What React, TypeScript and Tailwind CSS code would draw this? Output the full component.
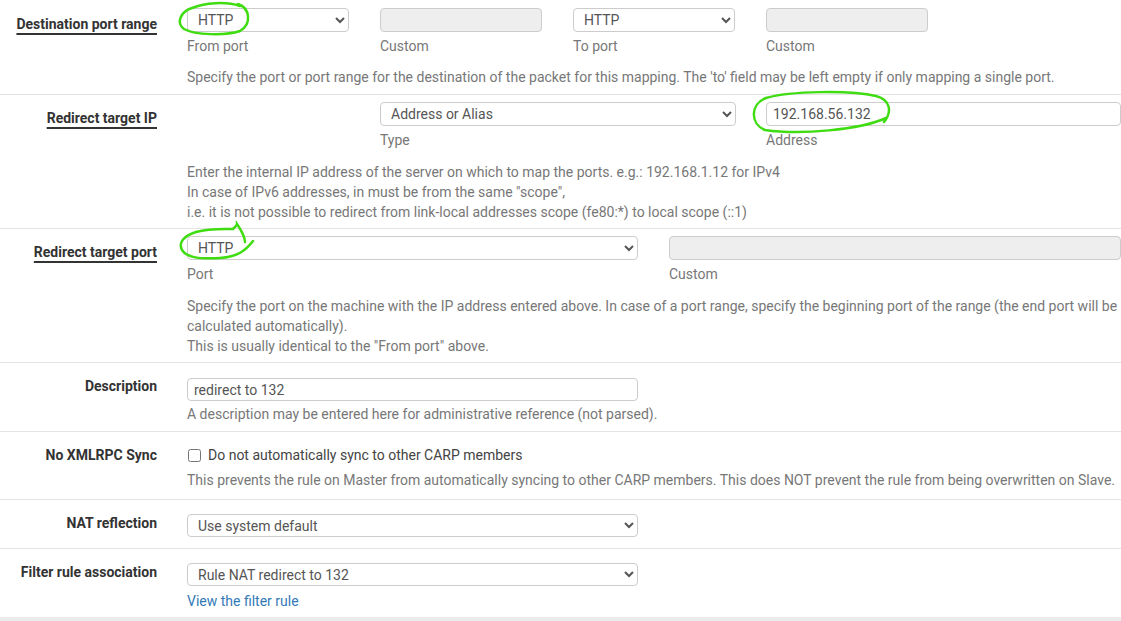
import React from "react";

type RowProps = {
  label: string;
  underline?: boolean;
  first?: boolean;
  children: React.ReactNode;
};

function Row({ label, underline, first, children }: RowProps) {
  return (
    <div
      className={
        first
          ? "flex border-t border-white bg-white"
          : "flex border-t border-[#e3e3e3] bg-white"
      }
    >
      <div className="w-[172px] shrink-0 pr-[15px] pt-[13px] text-right text-[14px] font-bold leading-5 text-[#333]">
        {underline ? (
          <span className="underline decoration-[1.5px] underline-offset-[4px]">
            {label}
          </span>
        ) : (
          label
        )}
      </div>
      <div className="min-w-0 flex-1 pl-[15px]">{children}</div>
    </div>
  );
}

function Select({ value, className }: { value: string; className: string }) {
  return (
    <select
      defaultValue={value}
      className={
        "block rounded-[4px] border border-[#ccc] bg-white pl-[6px] text-[14px] text-[#555] outline-none " +
        className
      }
    >
      <option>{value}</option>
    </select>
  );
}

function Sub({ children }: { children: React.ReactNode }) {
  return <div className="mt-[4px] text-[14px] leading-5 text-[#777]">{children}</div>;
}

const disabledInput =
  "block h-6 rounded-[4px] border border-[#ccc] bg-[#eee]";

export default function App() {
  return (
    <div className="relative min-h-screen w-[1121px] overflow-hidden bg-[#ebebeb] font-['Roboto',sans-serif]">
      <Row label="Destination port range" underline first>
        <div className="pt-[7px] pb-[7px]">
          <div className="flex">
            <div className="w-[193px]">
              <Select value="HTTP" className="h-6 w-[162px]" />
              <Sub>From port</Sub>
            </div>
            <div className="w-[193px]">
              <div className={disabledInput + " w-[162px]"} />
              <Sub>Custom</Sub>
            </div>
            <div className="w-[193px]">
              <Select value="HTTP" className="h-6 w-[162px]" />
              <Sub>To port</Sub>
            </div>
            <div className="w-[193px]">
              <div className={disabledInput + " w-[162px]"} />
              <Sub>Custom</Sub>
            </div>
          </div>
          <p className="mt-[11px] text-[14px] leading-5 text-[#777]">
            Specify the port or port range for the destination of the packet for this mapping. The 'to' field may be left empty if only mapping a single port.
          </p>
        </div>
      </Row>

      <Row label="Redirect target IP" underline>
        <div className="pt-[7px] pb-[6px]">
          <div className="flex">
            <div className="w-[193px]" />
            <div className="w-[386px]">
              <Select value="Address or Alias" className="h-6 w-[356px]" />
              <Sub>Type</Sub>
            </div>
            <div className="flex-1">
              <input
                defaultValue="192.168.56.132"
                className="block h-6 w-[355px] rounded-[4px] border border-[#ccc] bg-white px-[6px] text-[14px] text-[#555] outline-none"
              />
              <Sub>Address</Sub>
            </div>
          </div>
          <p className="mt-[12px] text-[14px] leading-5 text-[#777]">
            Enter the internal IP address of the server on which to map the ports. e.g.: 192.168.1.12 for IPv4
            <br />
            In case of IPv6 addresses, in must be from the same "scope",
            <br />
            i.e. it is not possible to redirect from link-local addresses scope (fe80:*) to local scope (::1)
          </p>
        </div>
      </Row>

      <Row label="Redirect target port" underline>
        <div className="pt-[7px] pb-[6px]">
          <div className="flex">
            <div className="w-[482px]">
              <Select value="HTTP" className="h-6 w-[451px]" />
              <Sub>Port</Sub>
            </div>
            <div className="flex-1">
              <div className={disabledInput + " w-[452px]"} />
              <Sub>Custom</Sub>
            </div>
          </div>
          <p className="mt-[12px] w-[934px] text-[14px] leading-5 text-[#777]">
            Specify the port on the machine with the IP address entered above. In case of a port range, specify the beginning port of the range (the end port will be calculated automatically).
            <br />
            This is usually identical to the "From port" above.
          </p>
        </div>
      </Row>

      <Row label="Description">
        <div className="pt-[15px] pb-[7px]">
          <input
            defaultValue="redirect to 132"
            className="block h-[23px] w-[451px] rounded-[4px] border border-[#ccc] bg-white px-[6px] text-[14px] text-[#555] outline-none"
          />
          <p className="mt-[3px] text-[14px] leading-5 text-[#777]">
            A description may be entered here for administrative reference (not parsed).
          </p>
        </div>
      </Row>

      <Row label="No XMLRPC Sync">
        <div className="pt-[13px] pb-[9px]">
          <label className="flex items-center text-[14px] leading-5 text-[#444]">
            <input type="checkbox" className="ml-[1px] mr-[7px] h-[13px] w-[13px]" />
            Do not automatically sync to other CARP members
          </label>
          <p className="mt-[5px] text-[14px] leading-5 text-[#777]">
            This prevents the rule on Master from automatically syncing to other CARP members. This does NOT prevent the rule from being overwritten on Slave.
          </p>
        </div>
      </Row>

      <Row label="NAT reflection">
        <div className="pt-[14px] pb-[11px]">
          <Select value="Use system default" className="h-[23px] w-[451px]" />
        </div>
      </Row>

      <Row label="Filter rule association">
        <div className="pt-[14px] pb-[6px]">
          <Select value="Rule NAT redirect to 132" className="h-[23px] w-[451px]" />
          <a href="#" className="mt-[5px] block text-[14px] leading-5 text-[#337ab7]">
            View the filter rule
          </a>
        </div>
      </Row>

      {/* hand drawn green marks */}
      <svg
        className="pointer-events-none absolute left-0 top-0"
        width="1121"
        height="621"
        fill="none"
        stroke="#3fdc12"
        strokeWidth="2.5"
        strokeLinecap="round"
      >
        <path d="M238 4 C250 8, 252 24, 240 31 C225 36, 195 35, 184 29 C176 23, 180 12, 192 8 C205 3, 225 1, 240 6" />
        <path d="M884 122 C892 112, 891 100, 876 96 C850 90, 790 91, 766 98 C750 104, 750 124, 765 130 C800 135, 860 130, 886 118" />
        <path d="M253 241 C246 250, 238 257, 220 258 C200 259, 187 258, 182 250 C178 242, 184 236, 196 232 C210 228, 226 229, 233 229 C236 226, 237 225, 237 224 C241 230, 245 236, 245 242" />
      </svg>
    </div>
  );
}
